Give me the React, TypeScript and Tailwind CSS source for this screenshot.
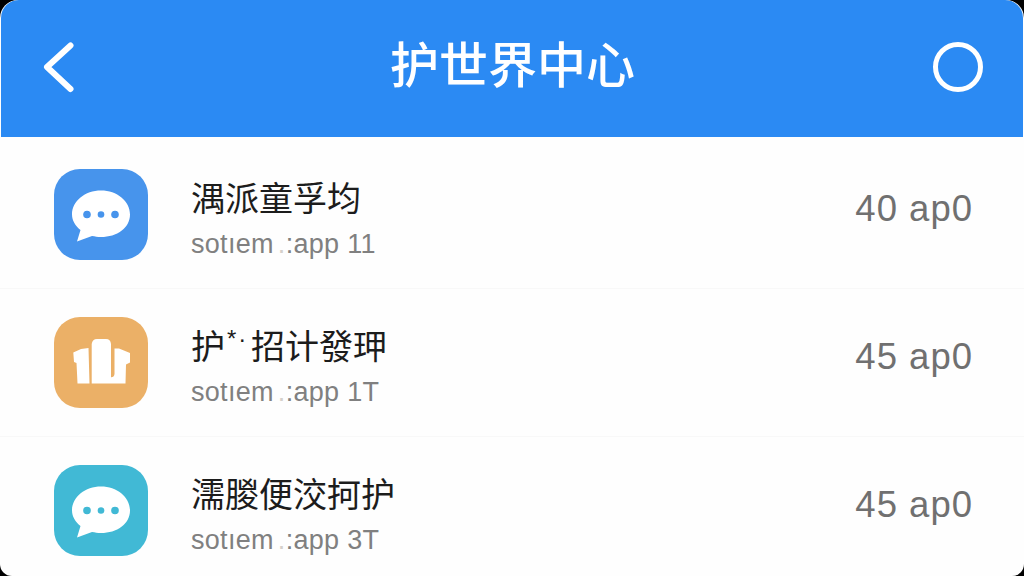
import type { ReactNode } from "react"

function ChatIcon() {
    return (
        <svg viewBox="0 0 94 91" className="h-full w-full" fill="currentColor">
            <path
                className="text-white"
                d="M47 21.5C63 21.5 76 32 76 45.5S63 68 47 68C43.5 68 41 67.4 38 67L23 72.5L26.5 61C21.5 57 18 51.500 18 45.500C18 32 31 21.500 47 21.500Z"
            />
            <circle cx="33" cy="45.500" r="3.800" />
            <circle cx="47" cy="45.500" r="3.300" />
            <circle cx="61" cy="45.500" r="3.800" />
        </svg>
    )
}

function ShopIcon() {
    return (
        <svg viewBox="0 0 94 91" className="h-full w-full" fill="white">
            <path d="M19.300 35.500L27 32L34.500 31L35.500 66.500H23.500L22.500 46L20 45Z" />
            <path d="M37.700 66.500V27Q38.500 22 43 22H52Q56.500 22 57 27V60.300Q60 60.500 60.500 57V31.500H65L76 36V45.500L72 47.500L71.500 66.500Z" />
        </svg>
    )
}

type Item = {
    id: number
    title: ReactNode
    count: string
    value: string
    color: string
    icon: ReactNode
}

const items: Item[] = [
    {
        id: 1,
        title: "湡派童孚均",
        count: "11",
        value: "40 ap0",
        color: "bg-[#4794ec] text-[#4794ec]",
        icon: <ChatIcon />,
    },
    {
        id: 2,
        title: (
            <>
                <span>护</span>
                <span className="w-[26px] pb-3 pl-0.5 font-['Liberation_Sans'] text-[24px] leading-none tracking-[2px]">
                    *·
                </span>
                <span>招计發玾</span>
            </>
        ),
        count: "1T",
        value: "45 ap0",
        color: "bg-[#ebb067] text-[#ebb067]",
        icon: <ShopIcon />,
    },
    {
        id: 3,
        title: "濡朡便洨抲护",
        count: "3T",
        value: "45 ap0",
        color: "bg-[#41b9d5] text-[#41b9d5]",
        icon: <ChatIcon />,
    },
]

function Row({ item }: { item: Item }) {
    return (
        <li className="flex h-[148px] shrink-0 items-center border-b border-[#f8f8f8] pr-[51px] pl-[54px]">
            <div className={`h-[91px] w-[94px] shrink-0 overflow-hidden rounded-[26px] ${item.color}`}>{item.icon}</div>
            <div className="ml-[43px] min-w-0 flex-1 pt-[8px]">
                <h2 className="flex h-[46px] items-center text-[34px] leading-[46px] whitespace-pre text-[#1c1c1c]">
                    {item.title}
                </h2>
                <p className="mt-[5px] flex h-[38px] font-['Liberation_Sans'] text-[27px] leading-[38px] tracking-[0.3px] whitespace-pre text-[#808080]">
                    <span>sotıem</span>
                    <span className="ml-1 text-[#d5d0cb]">.</span>
                    <span>:app {item.count}</span>
                </p>
            </div>
            <span className="mb-[10px] font-['Liberation_Sans'] text-[36.500px] leading-none tracking-[1px] whitespace-pre text-[#707070]">
                {item.value}
            </span>
        </li>
    )
}

export default function App() {
    return (
        <div className="h-[576px] w-[1024px] overflow-hidden bg-black font-['Noto_Sans_CJK_SC',sans-serif]">
            <div className="flex h-full flex-col overflow-hidden rounded-t-[18px] rounded-b-[12px] bg-[#fefefe]">
                <header className="mx-px flex h-[137px] shrink-0 items-center justify-between rounded-t-[18px] bg-[#2b8af3] pr-[40px] pl-[41px]">
                    <svg viewBox="0 0 34 52" className="mb-1 h-[52px] w-[50px]" fill="none" preserveAspectRatio="xMinYMid">
                        <path
                            d="M28.500 4.500L5 26L28.500 48"
                            stroke="white"
                            strokeWidth="6"
                            strokeLinecap="round"
                            strokeLinejoin="round"
                        />
                    </svg>
                    <h1 className="mb-[14px] text-[49px] leading-[72px] font-medium text-white">护世界中心</h1>
                    <span className="mb-1 h-[50px] w-[50px] rounded-full border-[5px] border-white" />
                </header>
                <ul className="flex flex-col pt-1">
                    {items.map((item) => (
                        <Row key={item.id} item={item} />
                    ))}
                </ul>
            </div>
        </div>
    )
}
